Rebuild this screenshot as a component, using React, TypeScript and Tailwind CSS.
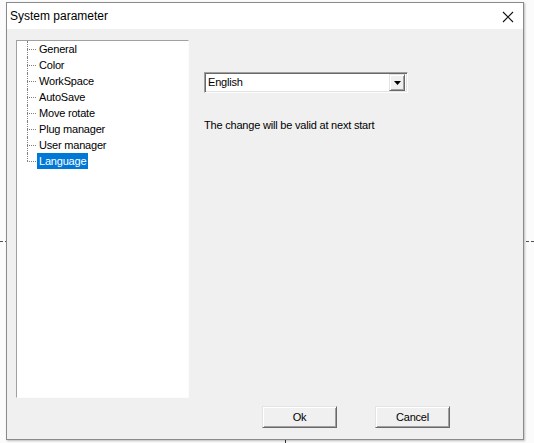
import React from 'react';

const items = ['General', 'Color', 'WorkSpace', 'AutoSave', 'Move rotate', 'Plug manager', 'User manager', 'Language'];

const TreeItem: React.FC<{ label: string; selected?: boolean; last?: boolean }> = ({ label, selected, last }) => (
  <div className="relative flex h-4 items-center pl-[20px]">
    {/* dotted connectors */}
    <div className="absolute left-[10px] top-[8px] w-[9px] border-t border-dotted border-[#808080]" />
    <div
      className={`absolute left-[10px] border-l border-dotted border-[#808080] ${last ? 'top-0 h-[8px]' : 'top-0 h-4'}`}
    />
    <span className={`px-[2px] leading-4 ${selected ? 'bg-[#0078d7] text-white' : 'text-black'}`}>{label}</span>
  </div>
);

const Win95Button: React.FC<{ label: string }> = ({ label }) => (
  <button className="h-[22px] w-[75px] border border-t-[#e3e3e3] border-l-[#e3e3e3] border-r-[#696969] border-b-[#696969] bg-[#f0f0f0] text-[11px] text-black shadow-[inset_1px_1px_0_#ffffff,inset_-1px_-1px_0_#a0a0a0]">
    {label}
  </button>
);

const App: React.FC = () => {
  return (
    <div className="relative h-[443px] w-[534px] overflow-hidden bg-[#fbfbfb] font-['Liberation_Sans',Arial,sans-serif] tracking-[-0.2px]">
      {/* canvas guide lines behind the dialog */}
      <div className="absolute left-0 top-[241px] w-[534px] border-t border-dashed border-[#505050]" />
      <div className="absolute left-[285px] top-[436px] h-[10px] border-l border-[#303030]" />

      <div className="relative ml-[6px] mt-[2px] flex h-[438px] w-[518px] flex-col border border-[#8a8a8a] bg-[#f0f0f0] shadow-[1px_1px_2px_rgba(0,0,0,0.25)]">
        {/* title bar */}
        <div className="flex h-[26px] items-center justify-between bg-white pl-[3px] pr-[8px]">
          <span className="text-[12px] tracking-normal text-black">System parameter</span>
          <svg width="12" height="12" viewBox="0 0 12 12" className="mr-[1px] mt-[1px]">
            <path d="M1 1 L11 11 M11 1 L1 11" stroke="#111" strokeWidth="1.1" />
          </svg>
        </div>

        {/* client */}
        <div className="flex flex-1 flex-col px-[9px] pt-[11px]">
          <div className="flex gap-[15px]">
            {/* tree */}
            <div className="h-[358px] w-[173px] border border-t-[#a0a0a0] border-l-[#a0a0a0] border-r-[#fcfcfc] border-b-[#fcfcfc] shadow-[inset_1px_1px_0_#696969,inset_-1px_-1px_0_#e3e3e3]">
              <div className="h-full bg-white text-[11px]">
                {items.map((it, i) => (
                  <TreeItem key={it} label={it} selected={it === 'Language'} last={i === items.length - 1} />
                ))}
              </div>
            </div>

            {/* settings */}
            <div className="flex flex-col pt-[32px]">
              <div className="flex h-[21px] w-[204px] items-center border border-t-[#a0a0a0] border-l-[#a0a0a0] border-r-[#fcfcfc] border-b-[#fcfcfc] bg-white shadow-[inset_1px_1px_0_#696969,inset_-1px_-1px_0_#e3e3e3]">
                <span className="flex-1 pl-[3px] text-[11px] text-black">English</span>
                <div className="mr-[2px] flex h-[17px] w-[16px] items-center justify-center border border-t-[#e3e3e3] border-l-[#e3e3e3] border-r-[#696969] border-b-[#696969] bg-[#f0f0f0] shadow-[inset_1px_1px_0_#ffffff,inset_-1px_-1px_0_#a0a0a0]">
                  <svg width="7" height="4" viewBox="0 0 7 4">
                    <path d="M0 0 H7 L3.5 4 Z" fill="#000" />
                  </svg>
                </div>
              </div>
              <p className="mt-[24px] text-[11px] text-black">The change will be valid at next start</p>
            </div>
          </div>

          <div className="mt-[8px] flex gap-[38px] pl-[246px]">
            <Win95Button label="Ok" />
            <Win95Button label="Cancel" />
          </div>
        </div>
      </div>
    </div>
  );
};

export default App;
